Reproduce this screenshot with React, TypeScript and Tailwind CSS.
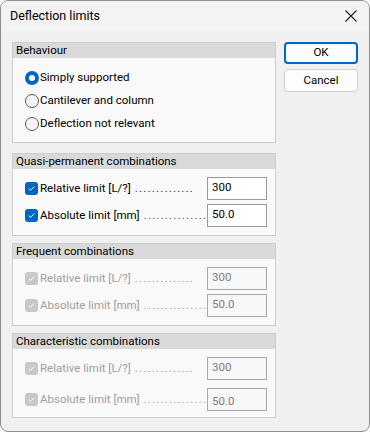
import React from "react";

const font = { fontFamily: 'Roboto, "Noto Sans", sans-serif' };

function Radio({ checked, label }: { checked?: boolean; label: string }) {
  return (
    <div className="flex items-center h-[23px]">
      {checked ? (
        <span className="w-[14px] h-[14px] rounded-full bg-[#0067c0] flex items-center justify-center">
          <span className="w-[6px] h-[6px] rounded-full bg-white" />
        </span>
      ) : (
        <span className="w-[14px] h-[14px] rounded-full border border-[#5a5a5a] bg-[#f4f4f4]" />
      )}
      <span className="ml-[1px] text-[11.5px] text-black">{label}</span>
    </div>
  );
}

function Check({ disabled }: { disabled?: boolean }) {
  return (
    <span
      className={
        "w-[13px] h-[13px] rounded-[3px] flex items-center justify-center shrink-0 " +
        (disabled ? "bg-[#c8c8c8]" : "bg-[#0067c0]")
      }
    >
      <svg width="9" height="9" viewBox="0 0 9 9">
        <path d="M1.8 4.6 L3.6 6.3 L7.2 2.6" fill="none" stroke="white" strokeWidth="1" />
      </svg>
    </span>
  );
}

function LimitRow({
  label,
  dots,
  value,
  disabled,
  dotColor,
  valueClass,
  rowClass,
}: {
  label: string;
  dots: string;
  value: string;
  disabled?: boolean;
  dotColor: string;
  valueClass: string;
  rowClass: string;
}) {
  return (
    <div className={"flex items-center " + rowClass}>
      <div className="w-[182px] flex items-center">
        <Check disabled={disabled} />
        <span className={"ml-[2px] text-[11.5px] whitespace-nowrap " + (disabled ? "text-[#9e9e9e]" : "text-black")}>
          {label}
          <span className={"ml-[4px] tracking-[1.2px] " + (disabled ? "text-[#9e9e9e]" : dotColor)}>{dots}</span>
        </span>
      </div>
      <div
        className={
          "w-[60px] h-[23px] border px-[4px] text-[11.5px] leading-[14px] " +
          valueClass +
          " " +
          (disabled ? "border-[#a8a8a8] text-[#7e7e7e] bg-[#f7f7f7]" : "border-[#9a9a9a] text-black bg-white")
        }
      >
        {value}
      </div>
    </div>
  );
}

function Group({ title, children, bodyClass }: { title: string; children: React.ReactNode; bodyClass: string }) {
  return (
    <div className="border border-[#cdcdcd] bg-[#f9f9f9]">
      <div className="h-[15px] bg-[#d9d9d9] pl-[3px] text-[11.5px] leading-[15px] text-black">{title}</div>
      <div className={bodyClass}>{children}</div>
    </div>
  );
}

function Limits({ disabled, wide }: { disabled?: boolean; wide?: boolean }) {
  return (
    <>
      <LimitRow
        label="Relative limit [L/?]"
        dots=".............."
        value="300"
        disabled={disabled}
        dotColor="text-[#2a2a58]"
        valueClass="pt-[2px]"
        rowClass="h-[27px]"
      />
      <LimitRow
        label="Absolute limit [mm]"
        dots="..............."
        value="50.0"
        disabled={disabled}
        dotColor="text-[#5b3fa8]"
        valueClass={wide ? "pt-[5px]" : "pt-[2px]"}
        rowClass={wide ? "h-[27px] mt-[4px]" : "h-[27px]"}
      />
    </>
  );
}

export default function App() {
  return (
    <div style={font} className="w-[370px] h-[432px] bg-white">
      <div className="w-[370px] h-[432px] border border-[#8e8e8e] rounded-[8px] bg-[#f0f0f0] overflow-hidden flex flex-col">
        <div className="h-[30px] bg-[#f3f3f3] flex items-center justify-between pl-[9px] pr-[8px] shrink-0">
          <span className="text-[12.5px] text-black">Deflection limits</span>
          <svg width="14" height="14" viewBox="0 0 14 14" className="mr-[3px]">
            <path d="M1.5 1.5 L12.5 12.5 M12.5 1.5 L1.5 12.5" stroke="#222" strokeWidth="1.1" fill="none" />
          </svg>
        </div>
        <div className="flex pl-[11px] pt-[11px]">
          <div className="w-[264px] flex flex-col">
            <Group title="Behaviour" bodyClass="h-[84px] pl-[12px] pt-[8px]">
              <Radio checked label="Simply supported" />
              <Radio label="Cantilever and column" />
              <Radio label="Deflection not relevant" />
            </Group>
            <div className="mt-[10px]">
              <Group title="Quasi-permanent combinations" bodyClass="h-[66px] pl-[12px] pt-[6px]">
                <Limits />
              </Group>
            </div>
            <div className="mt-[7px]">
              <Group title="Frequent combinations" bodyClass="h-[66px] pl-[12px] pt-[6px]">
                <Limits disabled />
              </Group>
            </div>
            <div className="mt-[7px]">
              <Group title="Characteristic combinations" bodyClass="h-[68px] pl-[12px] pt-[6px]">
                <Limits disabled wide />
              </Group>
            </div>
          </div>
          <div className="ml-[8px] flex flex-col gap-[5px]">
            <button className="w-[74px] h-[22px] rounded-[4px] border-2 border-[#0067c0] bg-[#fdfdfd] text-[11.5px] text-black leading-none">
              OK
            </button>
            <button className="w-[74px] h-[23px] rounded-[4px] border border-[#d0d0d0] bg-[#fdfdfd] text-[11.5px] text-black leading-none">
              Cancel
            </button>
          </div>
        </div>
      </div>
    </div>
  );
}
